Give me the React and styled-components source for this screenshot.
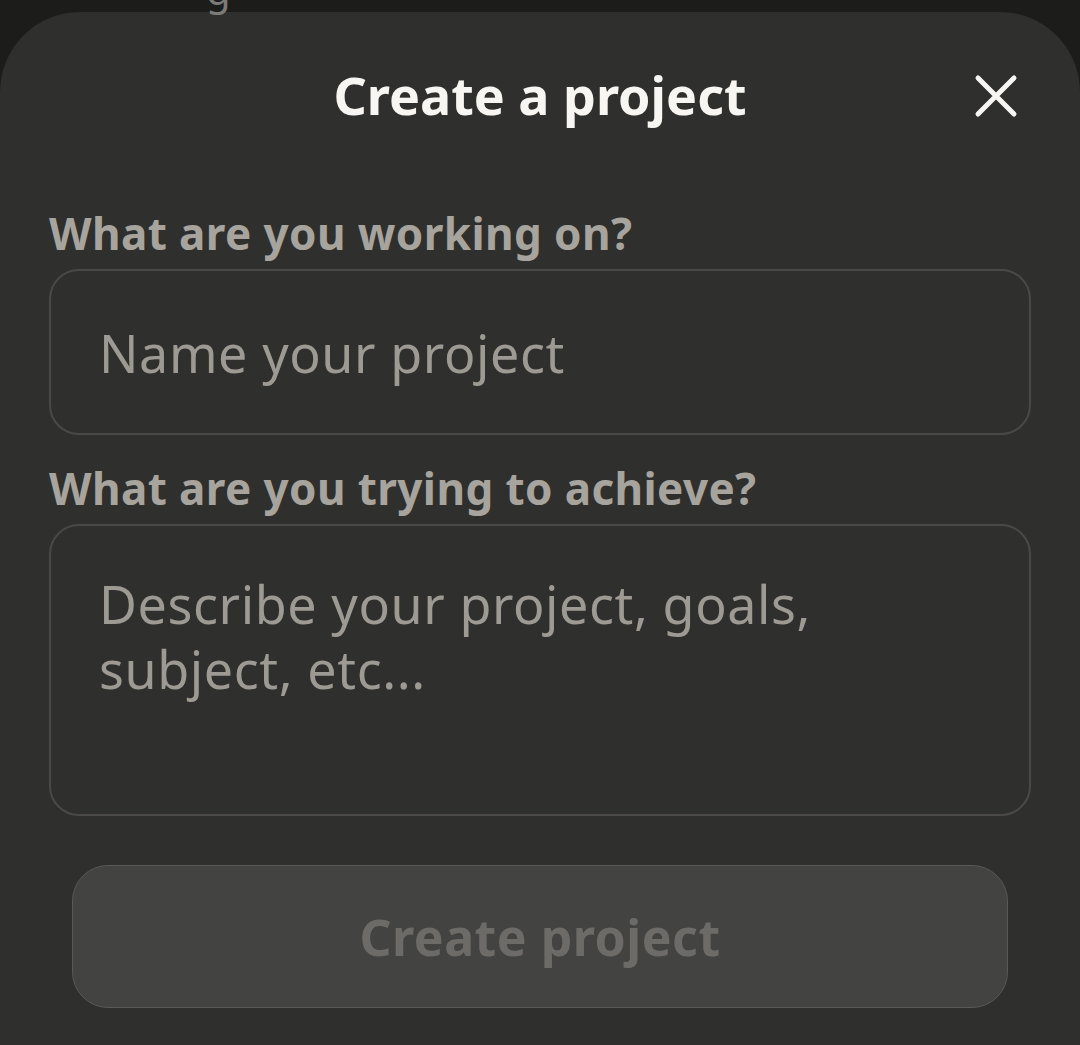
import React, { useState } from "react";
import styled, { createGlobalStyle } from "styled-components";

const GlobalStyle = createGlobalStyle`
  html, body {
    margin: 0;
    padding: 0;
    background: #1c1c1b;
    height: 100%;
  }
  #root {
    height: 100%;
  }
  * {
    box-sizing: border-box;
  }
`;

const Backdrop = styled.div`
  position: relative;
  height: 1045px;
  overflow: hidden;
  display: flex;
  flex-direction: column;
  padding-top: 12px;
`;

// bit of the page behind the sheet, only its descender shows
const PeekText = styled.span`
  position: absolute;
  top: -38px;
  left: 206px;
  font-family: "Noto Sans", sans-serif;
  font-size: 40px;
  color: #7c7b77;
`;

const Sheet = styled.div`
  flex: 1;
  background: #2f2f2d;
  border-radius: 80px 80px 0 0;
  padding: 0 49px;
  display: flex;
  flex-direction: column;
  font-family: "Noto Sans", "Open Sans", sans-serif;
`;

const Header = styled.div`
  position: relative;
  height: 166px;
  margin-bottom: 30px;
  display: flex;
  align-items: center;
  justify-content: center;
`;

const Title = styled.h1`
  margin: 0;
  font-size: 52px;
  font-weight: 700;
  color: #f7f6f2;
  line-height: 60px;
`;

const CloseButton = styled.button`
  position: absolute;
  right: 10px;
  top: 59px;
  width: 50px;
  height: 50px;
  padding: 0;
  border: none;
  background: transparent;
  display: flex;
  align-items: center;
  justify-content: center;
  cursor: pointer;
`;

const Field = styled.label`
  display: flex;
  flex-direction: column;
  gap: 11px;
  margin-bottom: ${(p) => p.$gap || 0}px;
`;

const Label = styled.span`
  font-size: 44px;
  font-weight: 700;
  color: #a7a49d;
  line-height: 50px;
  letter-spacing: 0.4px;
`;

const inputBase = `
  width: 100%;
  background: transparent;
  border: 2px solid #4a4947;
  border-radius: 30px;
  font-family: "Noto Sans", "Open Sans", sans-serif;
  font-size: 52px;
  letter-spacing: 0.6px;
  color: #f0efea;
  outline: none;
  &::placeholder {
    color: #9d9a93;
  }
`;

const TextInput = styled.input`
  ${inputBase}
  height: 166px;
  padding: 0 48px;
`;

const TextArea = styled.textarea`
  ${inputBase}
  height: 292px;
  padding: 45px 160px 45px 48px;
  line-height: 65px;
  resize: none;
`;

const SubmitButton = styled.button`
  margin: 49px 23px 0;
  height: 143px;
  border-radius: 36px;
  border: 1px solid #5a5957;
  background: #434341;
  color: #6c6b68;
  font-family: "Noto Sans", "Open Sans", sans-serif;
  font-size: 50px;
  font-weight: 700;
  letter-spacing: 0.5px;
  cursor: not-allowed;
`;

const CloseIcon = () => (
  <svg width="44" height="44" viewBox="0 0 44 44" fill="none">
    <path
      d="M4 4L40 40M40 4L4 40"
      stroke="#f7f6f2"
      strokeWidth="5"
      strokeLinecap="round"
    />
  </svg>
);

export default function App() {
  const [name, setName] = useState("");
  const [goal, setGoal] = useState("");

  return (
    <>
      <GlobalStyle />
      <Backdrop>
        <PeekText>g</PeekText>
        <Sheet>
          <Header>
            <Title>Create a project</Title>
            <CloseButton aria-label="Close">
              <CloseIcon />
            </CloseButton>
          </Header>
          <Field $gap={28}>
            <Label>What are you working on?</Label>
            <TextInput
              placeholder="Name your project"
              value={name}
              onChange={(e) => setName(e.target.value)}
            />
          </Field>
          <Field>
            <Label>What are you trying to achieve?</Label>
            <TextArea
              placeholder="Describe your project, goals, subject, etc..."
              value={goal}
              onChange={(e) => setGoal(e.target.value)}
            />
          </Field>
          <SubmitButton disabled={!name}>Create project</SubmitButton>
        </Sheet>
      </Backdrop>
    </>
  );
}
